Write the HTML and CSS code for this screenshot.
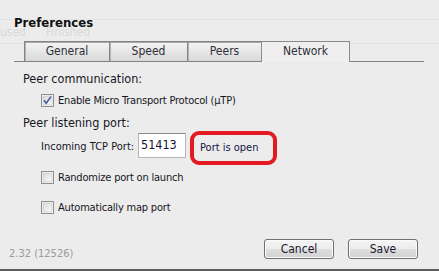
FILE: index.html
```html
<!DOCTYPE html>
<html>
<head>
<meta charset="utf-8">
<link rel="stylesheet" href="styles.css">
</head>
<body>
<div class="ghost">
  <div class="ghost-top"></div>
  <div class="ghost-row"><span class="g1">used</span><span class="g2">Finished</span></div>
</div>
<div class="dialog">
  <h1 class="title">Preferences</h1>
  <div class="tabs">
    <div class="tab t-general">General</div>
    <div class="tab t-speed">Speed</div>
    <div class="tab t-peers">Peers</div>
    <div class="tab t-network active">Network</div>
  </div>
  <div class="panel">
    <div class="section s1">Peer communication:</div>
    <div class="check-row r1">
      <svg class="cb" width="13" height="13" viewBox="0 0 13 13">
        <defs><linearGradient id="cg1" x1="0" y1="0" x2="1" y2="1"><stop offset="0" stop-color="#dadada"/><stop offset="1" stop-color="#fbfbfb"/></linearGradient></defs>
        <rect x="0.5" y="0.5" width="12" height="12" fill="#fff" stroke="#8f8f8f"/>
        <rect x="2" y="2" width="9" height="9" fill="url(#cg1)" stroke="#b9b9b9" stroke-width="0.6"/>
        <path d="M3 6.3 L5.2 9.3 L10 2.6" fill="none" stroke="#4a5d9e" stroke-width="1.6" stroke-linejoin="round"/>
      </svg>
      <span>Enable Micro Transport Protocol (µTP)</span>
    </div>
    <div class="section s2">Peer listening port:</div>
    <div class="port-row">
      <span class="port-label">Incoming TCP Port:</span>
      <span class="port-input">51413</span>
      <span class="status">Port is open</span>
    </div>
    <div class="check-row r3">
      <svg class="cb" width="13" height="13" viewBox="0 0 13 13">
        <defs><linearGradient id="cg2" x1="0" y1="0" x2="1" y2="1"><stop offset="0" stop-color="#dadada"/><stop offset="1" stop-color="#fbfbfb"/></linearGradient></defs>
        <rect x="0.5" y="0.5" width="12" height="12" fill="#fff" stroke="#8f8f8f"/>
        <rect x="2" y="2" width="9" height="9" fill="url(#cg2)" stroke="#b9b9b9" stroke-width="0.6"/>
      </svg>
      <span>Randomize port on launch</span>
    </div>
    <div class="check-row r4">
      <svg class="cb" width="13" height="13" viewBox="0 0 13 13">
        <defs><linearGradient id="cg3" x1="0" y1="0" x2="1" y2="1"><stop offset="0" stop-color="#dadada"/><stop offset="1" stop-color="#fbfbfb"/></linearGradient></defs>
        <rect x="0.5" y="0.5" width="12" height="12" fill="#fff" stroke="#8f8f8f"/>
        <rect x="2" y="2" width="9" height="9" fill="url(#cg3)" stroke="#b9b9b9" stroke-width="0.6"/>
      </svg>
      <span>Automatically map port</span>
    </div>
  </div>
  <div class="footer">
    <span class="version">2.32 (12526)</span>
    <div class="buttons">
      <button class="btn">Cancel</button>
      <button class="btn">Save</button>
    </div>
  </div>
</div>
</body>
</html>
```

FILE: styles.css
```css
html, body {
  margin: 0;
  padding: 0;
}
body {
  width: 439px;
  height: 271px;
  overflow: hidden;
  background: #ececec;
  font-family: "DejaVu Sans Condensed", "DejaVu Sans", sans-serif;
  font-stretch: condensed;
  color: #16161e;
  position: relative;
}
.ghost {
  position: absolute;
  top: 0;
  left: 0;
  right: 0;
  z-index: 0;
}
.ghost-top {
  height: 19px;
  border-bottom: 1px solid #e4e4e4;
}
.ghost-row {
  height: 24px;
  border-bottom: 1px solid #e4e4e4;
  font-size: 12px;
  line-height: 15px;
  padding-top: 5px;
  box-sizing: border-box;
  color: #d9d9d9;
  display: flex;
}
.ghost-row .g1 { margin-left: 0; }
.ghost-row .g2 { margin-left: 20px; }
.dialog {
  position: relative;
  z-index: 1;
  height: 271px;
  box-sizing: border-box;
  border-bottom: 2px solid #5c5c5c;
  display: flex;
  flex-direction: column;
}
.title {
  margin: 0;
  padding: 15px 0 0 14px;
  font-size: 13px;
  line-height: 16px;
  font-weight: bold;
  color: #111;
}
.tabs {
  margin: 10px 0 0 14px;
  width: 410px;
  padding-left: 10px;
  box-sizing: border-box;
  border-bottom: 1px solid #828282;
  display: flex;
  height: 21px;
}
.tab {
  height: 20px;
  box-sizing: border-box;
  border: 1px solid #858585;
  border-bottom: none;
  background: linear-gradient(#f4f4f4, #e6e6e6 50%, #d9d9d9);
  box-shadow: inset 0 1px 0 #a8a8a8, inset 1px 0 0 #b4b4b4;
  font-size: 12px;
  line-height: 19px;
  text-align: center;
  color: #303038;
}
.t-general { width: 86px; }
.t-speed { width: 79px; margin-left: -1px; }
.t-peers { width: 75px; margin-left: -1px; }
.t-network { width: 89px; margin-left: -1px; }
.tab.active {
  background: #efefef;
  box-shadow: none;
  height: 21px;
  border-color: #8a8a8a;
  margin-bottom: -1px;
  position: relative;
}
.panel {
  padding-left: 23px;
}
.section {
  font-size: 12.5px;
  line-height: 15px;
}
.s1 { margin-top: 9px; }
.s2 { margin-top: 7px; }
.check-row {
  display: flex;
  align-items: center;
  height: 15px;
  margin-left: 18px;
  font-size: 11px;
  line-height: 15px;
  letter-spacing: -0.2px;
}
.check-row .cb {
  margin-right: 4px;
  flex: none;
}
.r1 { margin-top: 7px; }
.r3 { margin-top: 5px; }
.r4 { margin-top: 15px; }
.port-row {
  margin-top: 1px;
  margin-left: 18px;
  display: flex;
  align-items: flex-start;
  height: 34px;
}
.port-label {
  font-size: 11px;
  line-height: 13px;
  margin-top: 9px;
  width: 97px;
}
.port-input {
  width: 48px;
  height: 25px;
  margin-top: 2px;
  box-sizing: border-box;
  background: #fff;
  border: 1px solid #b5b5b5;
  border-top-color: #8d8d8d;
  font-size: 12.5px;
  line-height: 22px;
  padding-left: 2px;
  color: #14143a;
}
.status {
  margin-left: 4px;
  width: 87px;
  height: 34px;
  box-sizing: border-box;
  border: 4px solid #e31a22;
  border-radius: 9px;
  font-size: 11px;
  line-height: 26px;
  padding-left: 6px;
  color: #161644;
}
.footer {
  margin-top: auto;
  display: flex;
  align-items: flex-end;
  justify-content: space-between;
  padding: 0 21px 10px 9px;
}
.version {
  font-size: 11px;
  line-height: 13px;
  color: #9a9a9a;
  margin-bottom: -1px;
}
.buttons {
  display: flex;
  gap: 14px;
}
.btn {
  width: 70px;
  height: 20px;
  box-sizing: border-box;
  border: 1px solid #707070;
  border-radius: 3px;
  background: linear-gradient(#f5f5f5, #ececec 48%, #dedede 52%, #d2d2d2);
  box-shadow: inset 0 0 0 1px #fbfbfb;
  font-family: inherit;
  font-stretch: condensed;
  font-size: 12px;
  line-height: 16px;
  color: #1a1a2c;
  padding: 0;
}
```
